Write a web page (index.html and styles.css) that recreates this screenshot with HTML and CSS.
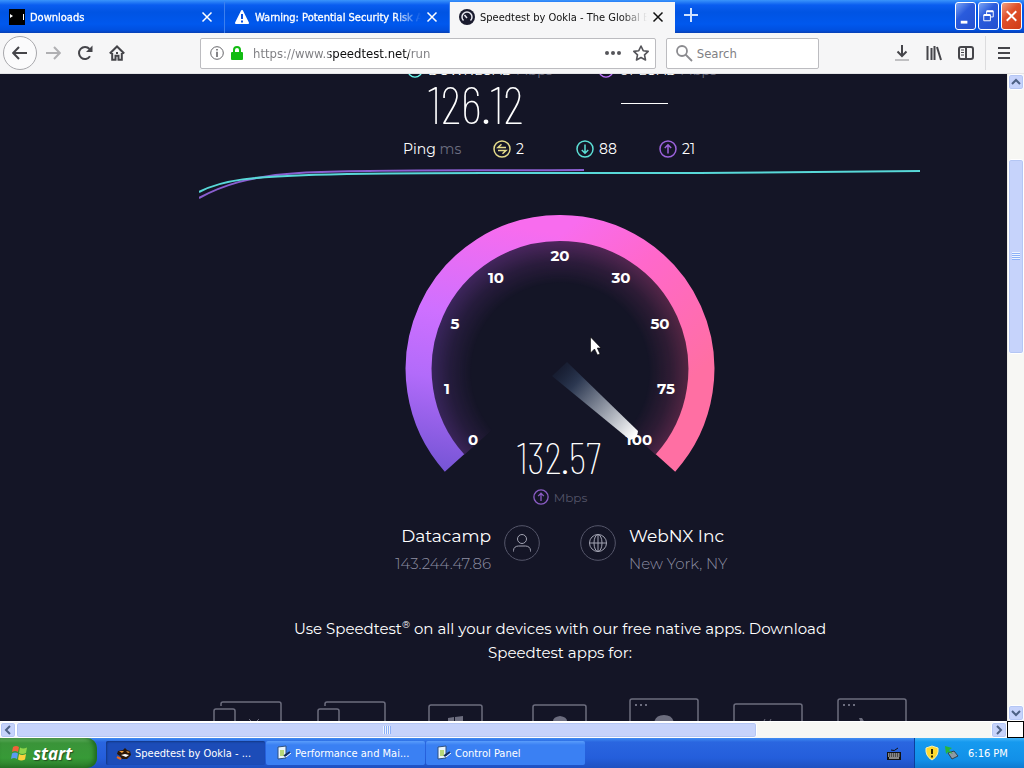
FILE: index.html
```html
<!DOCTYPE html>
<html lang="en">
<head>
<meta charset="utf-8">
<title>Speedtest by Ookla - The Global Broadband Speed Test</title>
<link rel="stylesheet" href="styles.css">
</head>
<body>
<header class="tabbar">
  <div class="tab">
    <svg class="tab-icon" viewBox="0 0 16 16"><path fill="#000" d="M0 0h16v16H0z"/><path fill="#fff" d="M1 5l3 2-3 2zM14 5h1v6h-1z"/></svg>
    <button class="tab-title">Downloads</button>
    <button class="tab-close" aria-label="Close Downloads"><svg viewBox="0 0 12 12"><path d="M1.500 1.500l9 9M10.500 1.500l-9 9"/></svg></button>
  </div>
  <div class="tab">
    <svg class="tab-icon" viewBox="0 0 16 16"><path fill="#fff" stroke="#fff" stroke-width="2" stroke-linejoin="round" d="M8 2l6 12H2z"/><path fill="#0a50dc" d="M7 5h2v5H7zM7 11.500h2v2H7z"/></svg>
    <button class="tab-title">Warning: Potential Security Risk Ahead</button>
    <button class="tab-close" aria-label="Close Warning"><svg viewBox="0 0 12 12"><path d="M1.500 1.500l9 9M10.500 1.500l-9 9"/></svg></button>
  </div>
  <div class="tab tab-active">
    <svg class="tab-icon" viewBox="0 0 16 16"><circle cx="8" cy="8" r="8" fill="#1a1b2e"/><path d="M4.500 11.500a5 5 0 1 1 7 0" fill="none" stroke="#e8e8f0" stroke-width="1.500"/><path d="M8 9L5.500 6" stroke="#e8e8f0" stroke-width="1.500"/></svg>
    <button class="tab-title">Speedtest by Ookla - The Global Broadband</button>
    <button class="tab-close" aria-label="Close Speedtest"><svg viewBox="0 0 12 12"><path d="M1.500 1.500l9 9M10.500 1.500l-9 9"/></svg></button>
  </div>
  <button class="new-tab" aria-label="New tab"><svg viewBox="0 0 14 14"><path d="M7 0v14M0 7h14"/></svg></button>
  <div class="window-controls">
    <button aria-label="Minimize"><svg viewBox="0 0 20 26"><path d="M5 18h7v3H5z" fill="#fff"/></svg></button>
    <button aria-label="Restore"><svg viewBox="0 0 20 26"><path d="M8 11V8h7v6h-3M5 12h7v6H5z" fill="none" stroke="#fff"/><path d="M8 8h7M5 12h7" stroke="#fff" stroke-width="2"/></svg></button>
    <button class="win-close" aria-label="Close"><svg viewBox="0 0 20 26"><path d="M5 8l10 10M15 8L5 18" stroke="#fff" stroke-width="2"/></svg></button>
  </div>
</header>

<nav class="toolbar">
  <button class="tool back" aria-label="Back"><svg viewBox="0 0 16 16"><path d="M15 8H1.500M7 2L1.200 8 7 14"/></svg></button>
  <button class="tool forward" aria-label="Forward" disabled><svg viewBox="0 0 16 16"><path d="M1 8h13.500M9 2l5.800 6L9 14"/></svg></button>
  <button class="tool" aria-label="Reload"><svg viewBox="0 0 16 16"><path d="M13 11.300A6 6 0 1 1 12.500 4"/><path d="M15.500.500V7H9z" fill="#45454a" stroke="none"/></svg></button>
  <button class="tool" aria-label="Home"><svg viewBox="0 0 16 16"><path d="M.800 8.500L8 1.500l7.200 7M3.200 8v6.800h3.300v-4h3v4h3.300V8"/><path d="M8 7v2" /></svg></button>
  <div class="address">
    <svg class="small-icon" viewBox="0 0 14 14"><circle cx="7" cy="7" r="6.300" fill="none" stroke="#66666a"/><path d="M6.200 3h1.600v1.600H6.200zM6.200 5.800h1.600V11H6.200z" fill="#66666a"/></svg>
    <svg class="small-icon" viewBox="0 0 14 14"><rect x="1" y="6" width="12" height="8" rx="1" fill="#12bc12"/><path d="M4 7V4a3 3 0 0 1 6 0v3" fill="none" stroke="#12bc12" stroke-width="2"/></svg>
    <input class="url" type="text" aria-label="Address" value="https://www.speedtest.net/run">
    <button class="mini" aria-label="Page actions"><svg viewBox="0 0 18 18"><g fill="#55555a"><circle cx="3" cy="9" r="2"/><circle cx="9" cy="9" r="2"/><circle cx="15" cy="9" r="2"/></g></svg></button>
    <button class="mini" aria-label="Bookmark"><svg viewBox="0 0 18 18"><path d="M9 2l2.200 4.700 5 .700-3.700 3.500 1 5.100L9 13.500 4.500 16l1-5.100L1.800 7.400l5-.700z" fill="none" stroke="#55555a" stroke-width="1.600" stroke-linejoin="round"/></svg></button>
  </div>
  <label class="search">
    <svg viewBox="0 0 18 18"><g fill="none" stroke="#8b8b8f" stroke-width="1.800"><circle cx="7" cy="7" r="5"/><path d="M10.500 10.500L17 17"/></g></svg>
    <input type="text" placeholder="Search" aria-label="Search">
  </label>
  <div class="tool-end">
    <button class="tool" aria-label="Downloads"><svg viewBox="0 0 16 16"><path d="M8 0v11M3.500 6.500L8 11l4.500-4.500"/><path d="M1 15h14" stroke-width="1" stroke="#8a8a8e"/></svg></button>
    <button class="tool" aria-label="Library"><svg viewBox="0 0 16 16"><path d="M1.500 1v14M5.500 3v12M8.500 1v14M11 2l4 13" /></svg></button>
    <button class="tool" aria-label="Sidebars"><svg viewBox="0 0 16 16"><rect x="1" y="2" width="14" height="12" rx="2"/><path d="M8 2v12"/><path d="M3 5h3M3 7.500h3M3 10h3" stroke-width="1"/></svg></button>
    <button class="tool menu" aria-label="Menu"><svg viewBox="0 0 16 16"><path d="M2 3h12M2 8h12M2 13h12"/></svg></button>
  </div>
</nav>

<div class="viewport">
  <main class="page">
    <section class="results">
      <div class="label"><svg class="ring" viewBox="0 0 18 18"><circle cx="9" cy="9" r="8" stroke="#6afff3"/></svg><span>DOWNLOAD <i>Mbps</i></span></div>
      <div class="label"><svg class="ring" viewBox="0 0 18 18"><circle cx="9" cy="9" r="8" stroke="#bf71ff"/></svg><span>UPLOAD <i>Mbps</i></span></div>
      <div class="value">126.12</div>
      <div class="value"><span class="dash"></span></div>
    </section>
    <section class="ping">
      <span>Ping <i>ms</i></span>
      <span class="metric"><svg class="ring" viewBox="0 0 18 18"><g stroke="#e6dc8a"><circle cx="9" cy="9" r="8"/><path d="M13 7.500H5L8.500 4.300M5 10.500h8L9.500 13.700"/></g></svg>2</span>
      <span class="metric"><svg class="ring" viewBox="0 0 18 18"><g stroke="#5ce0d6"><circle cx="9" cy="9" r="8"/><path d="M9 4.500v8.500M5.800 10L9 13.200 12.200 10"/></g></svg>88</span>
      <span class="metric"><svg class="ring" viewBox="0 0 18 18"><g stroke="#9c62dc"><circle cx="9" cy="9" r="8"/><path d="M9 13.500V5M5.800 8L9 4.800 12.200 8"/></g></svg>21</span>
    </section>
    <svg class="graph" viewBox="0 0 722 40" aria-label="Speed over time">
      <path d="M0 34C22 22 50 12 100 9 180 5 260 7 385 6" stroke="#8a5fd0"/>
      <path d="M0 28C25 15 55 13 110 11 180 8 280 9 380 9H500C580 8 660 8 721 7" stroke="#58d8d8"/>
    </svg>
    <section class="gauge">
      <svg viewBox="400 204 320 280" aria-label="Upload gauge">
        <defs>
          <linearGradient id="arcLeft" gradientUnits="userSpaceOnUse" x1="450" y1="475" x2="500" y2="215">
            <stop offset="0" stop-color="#7454d4"/><stop offset=".35" stop-color="#b26bfa"/><stop offset=".6" stop-color="#ce70ff"/><stop offset=".97" stop-color="#f86cee"/>
          </linearGradient>
          <linearGradient id="arcRight" gradientUnits="userSpaceOnUse" x1="550" y1="215" x2="690" y2="380">
            <stop offset=".1" stop-color="#f86cee"/><stop offset=".45" stop-color="#ff68cb"/><stop offset="1" stop-color="#ff6fa3"/>
          </linearGradient>
          <linearGradient id="glowTint" x1="0" x2="1"><stop offset="0" stop-color="#713fb0"/><stop offset=".5" stop-color="#a63fae"/><stop offset="1" stop-color="#b8406e"/></linearGradient>
          <radialGradient id="glowFade" gradientUnits="userSpaceOnUse" cx="560" cy="372" r="130">
            <stop offset=".68" stop-color="#000"/><stop offset=".85" stop-color="#2a2a2a"/><stop offset="1" stop-color="#666"/>
          </radialGradient>
          <mask id="glowMask"><path d="M464 455A129 129 0 1 1 656 455L560 369Z" fill="url(#glowFade)"/></mask>
          <linearGradient id="needle" gradientUnits="userSpaceOnUse" x1="556" y1="366" x2="634" y2="437">
            <stop offset="0" stop-color="#1c2a44" stop-opacity=".2"/><stop offset=".25" stop-color="#2c3851"/><stop offset="1" stop-color="#fff"/>
          </linearGradient>
        </defs>
        <rect x="430" y="240" width="260" height="220" fill="url(#glowTint)" mask="url(#glowMask)"/>
        <path d="M454.500 463A141 141 0 0 1 561 228" fill="none" stroke="url(#arcLeft)" stroke-width="26"/>
        <path d="M560 228A141 141 0 0 1 665.500 463" fill="none" stroke="url(#arcRight)" stroke-width="26"/>
        <g class="ticks">
          <text x="473" y="445">0</text><text x="447" y="394">1</text><text x="455" y="329">5</text><text x="496" y="283">10</text><text x="560" y="261">20</text><text x="621" y="283">30</text><text x="660" y="329">50</text><text x="666" y="394">75</text><text x="639" y="445">100</text>
        </g>
        <path d="M552 376L567 362 638 431Q638 438 630 440Z" fill="url(#needle)"/>
        <text class="reading" x="559" y="474">132.57</text>
      </svg>
      <svg class="cursor" viewBox="0 0 12 20"><path d="M.500 1v16l4-4 3 6 2.500-1-2.700-6H11z" fill="#fff" stroke="#000" stroke-width=".6"/></svg>
    </section>
    <p class="unit"><svg class="ring" viewBox="0 0 18 18"><g stroke="#8a5cc4"><circle cx="9" cy="9" r="8"/><path d="M9 13.500V5M5.800 8L9 4.800 12.200 8"/></g></svg>Mbps</p>
    <section class="hosts">
      <div class="host host-client">
        <svg class="host-icon" viewBox="0 0 36 36"><circle cx="18" cy="18" r="17.300" stroke="#55566a"/><circle cx="18" cy="14" r="4.500"/><path d="M9.500 26.500v-1c0-3 2.500-4.500 5-4.500h7c2.500 0 5 1.500 5 4.500v1"/></svg>
        <div class="host-text"><b>Datacamp</b><span>143.244.47.86</span></div>
      </div>
      <div class="host">
        <svg class="host-icon" viewBox="0 0 36 36"><circle cx="18" cy="18" r="17.300" stroke="#55566a"/><circle cx="18" cy="18" r="8.500"/><ellipse cx="18" cy="18" rx="4" ry="8.500"/><path d="M18 9.500v17M9.500 18h17"/></svg>
        <div class="host-text"><b>WebNX Inc</b><span>New York, NY</span></div>
      </div>
    </section>
    <p class="promo">Use Speedtest<sup>®</sup> on all your devices with our free native apps. Download Speedtest apps for:</p>
    <section class="devices">
      <svg viewBox="0 0 104 40"><path d="M25 11V9q0-2 2-2h56q2 0 2 2v31M18 40V16q0-2 2-2h17q2 0 2 2v24"/><path class="faint" d="M53 24l2 2M63 24l-2 2"/></svg>
      <svg viewBox="0 0 104 40"><path d="M25 11V9q0-2 2-2h56q2 0 2 2v31M18 40V16q0-2 2-2h17q2 0 2 2v24"/></svg>
      <svg viewBox="0 0 104 40"><path d="M25 40V12q0-2 2-2h49q2 0 2 2v28"/><path class="solid" d="M44 23l6-1v8h-6zM51 22l8-1v9h-8z"/></svg>
      <svg viewBox="0 0 104 40"><path d="M25 40V12q0-2 2-2h49q2 0 2 2v28"/><path class="solid" d="M45 30v-4q0-4 7-5 7 1 7 5v4z"/></svg>
      <svg viewBox="0 0 104 40"><path d="M18 40V6q0-2 2-2h64q2 0 2 2v34"/><path class="solid" d="M23 9h2v2h-2zM28 9h2v2h-2zM33 9h2v2h-2zM42 30q0-10 10-10t10 10z"/></svg>
      <svg viewBox="0 0 104 40"><path d="M18 40V11q0-2 2-2h64q2 0 2 2v29"/><path class="faint" d="M48 26l1-2M54 26l1-2"/></svg>
      <svg viewBox="0 0 104 40"><path d="M18 40V6q0-2 2-2h64q2 0 2 2v34"/><path class="solid" d="M23 9h2v2h-2zM28 9h2v2h-2zM33 9h2v2h-2zM39 23l3 0 3 5h-4z"/></svg>
    </section>
  </main>
  <div class="scroll scroll-y">
    <button aria-label="Scroll up"><svg viewBox="0 0 14 14"><path d="M3 9l4-4 4 4"/></svg></button>
    <span class="before"></span><span class="thumb"></span><span class="after"></span>
    <button aria-label="Scroll down"><svg viewBox="0 0 14 14"><path d="M3 5l4 4 4-4"/></svg></button>
  </div>
  <div class="scroll scroll-x">
    <button aria-label="Scroll left"><svg viewBox="0 0 14 14"><path d="M9 3L5 7l4 4"/></svg></button>
    <span class="thumb"></span><span class="after"></span>
    <button aria-label="Scroll right"><svg viewBox="0 0 14 14"><path d="M5 3l4 4-4 4"/></svg></button>
  </div>
  <div class="corner"></div>
</div>

<footer class="taskbar">
  <button class="start"><svg viewBox="0 0 18 18"><path d="M2 3q3-2 6 0L7 8Q4 6 1 8z" fill="#f0623a"/><path d="M9 3.500q3 2 7 0L15 9q-4 2-7 0z" fill="#8fd54a"/><path d="M1 9.500q3-2 6 0L6 15q-3-2-6 0z" fill="#5b9bf0"/><path d="M8 10q3 2 7 0l-1 5.500q-4 2-7 0z" fill="#fbd13c"/></svg>start</button>
  <button class="task task-active"><svg viewBox="0 0 16 16"><path d="M2 6l5-1 2-2 2 2 3 1 1 4-4 4H6L4 11 1 9z" fill="#2a1608"/><path d="M3 6l5 0-2 2zM10 6l4 1-2 1z" fill="#f4a340"/><path d="M5 10l4-1 4 1-3 2z" fill="#fff"/><path d="M1 12l4 2" stroke="#e66a1e" stroke-width="2"/></svg>Speedtest by Ookla - ...</button>
  <button class="task"><svg viewBox="0 0 16 16"><path d="M2 2l8-1v12l-8 1z" fill="#e8f4fa" stroke="#2c4f80"/><path d="M4 5l4 0v6H4z" fill="#b8d878"/><path d="M8 11l6-4" stroke="#152c60" stroke-width="2"/><path d="M10 12l5-4" stroke="#fff"/></svg>Performance and Mai...</button>
  <button class="task"><svg viewBox="0 0 16 16"><path d="M2 2l8-1v12l-8 1z" fill="#e8f4fa" stroke="#2c4f80"/><path d="M4 5l4 0v6H4z" fill="#b8d878"/><path d="M8 11l6-4" stroke="#152c60" stroke-width="2"/><path d="M10 12l5-4" stroke="#fff"/></svg>Control Panel</button>
  <svg class="keyboard" viewBox="0 0 14 14"><path d="M4 3q3 2 7-2" stroke="#111" fill="none"/><path d="M0 5h14v8H0z" fill="#111"/><path d="M1 7h12M1 9h12" stroke="#fff" stroke-dasharray="1.500 .5"/><path d="M2 11h10" stroke="#fff"/></svg>
  <div class="tray">
    <svg viewBox="0 0 16 16"><path d="M8 1l6 2q1 8-6 12Q1 11 2 3z" fill="#ffd92e" stroke="#f6f0b0"/><path d="M7 4h2v5H7zM7 10.500h2v2H7z" fill="#332a00"/></svg>
    <svg viewBox="0 0 16 16"><path d="M5 8l6-2 4 5-6 3z" fill="#8d9aa4" stroke="#2e4350"/><path d="M2 1l7 2-3 2 4 4-5-2-2 2z" fill="#28b53a"/></svg>
    <time>6:16 PM</time>
  </div>
</footer>
</body>
</html>
```
FILE: styles.css
```css
* { box-sizing: border-box; }

body {
  margin: 0;
  height: 100vh;
  display: flex;
  flex-direction: column;
  overflow: hidden;
  font-family: "DejaVu Sans Condensed", "Noto Sans", sans-serif;
  font-size: 11px;
}

button {
  margin: 0;
  padding: 0;
  border: 0;
  background: none;
  color: inherit;
  font: inherit;
}

input {
  min-width: 0;
  border: 0;
  padding: 0;
  outline: 0;
  background: none;
  font: inherit;
}

svg { display: block; flex: none; }

/* Tabs */
.tabbar {
  display: flex;
  flex: none;
  height: 33px;
  padding-top: 2px;
  background: linear-gradient(#3a94fb, #0a5df0 5px, #0054e3 12px, #0058ee 24px, #0050e0 30px, #0840b4);
}

.tab {
  display: flex;
  align-items: center;
  flex: 0 1 225px;
  min-width: 0;
  gap: 5px;
  padding: 0 11px 1px 9px;
  color: #fff;
  border-right: 1px solid #3d80ee;
}

.tab-icon { width: 16px; height: 16px; }

.tab-title {
  flex: 1;
  min-width: 0;
  overflow: hidden;
  white-space: nowrap;
  text-align: left;
  -webkit-text-stroke: 0.3px currentColor;
  mask-image: linear-gradient(to left, transparent, #000 26px);
}

.tab-close svg { width: 12px; height: 12px; }
.tab-close path { stroke: currentColor; stroke-width: 1.5; }

.tab-active {
  background: #f6f6f7;
  color: #111;
  border-right: 0;
}

.tab-active .tab-title { -webkit-text-stroke: 0; }

.new-tab { padding: 0 10px 5px 9px; }
.new-tab svg { width: 14px; height: 14px; }
.new-tab path { stroke: #cfe2ff; stroke-width: 2; }

.window-controls {
  display: flex;
  gap: 2px;
  margin-left: auto;
  padding: 0 2px;
}

.window-controls button {
  width: 21px;
  height: 28px;
  border: 1px solid #fff;
  border-radius: 3px;
  background: linear-gradient(135deg, #7ba5f5, #2a5bdc 40%, #2350cf);
}

.window-controls svg { width: 19px; height: 26px; }
.window-controls .win-close { background: linear-gradient(135deg, #f0a184, #e0512b 40%, #cf3c16); }

/* Navigation toolbar */
.toolbar {
  display: flex;
  align-items: center;
  flex: none;
  height: 41px;
  padding: 0 3px;
  background: #f6f6f7;
  border-bottom: 1px solid #e4e4e6;
  font-size: 13px;
}

.tool {
  display: grid;
  flex: none;
  place-items: center;
  width: 32px;
  height: 34px;
}

.tool svg { width: 16px; height: 16px; fill: none; stroke: #45454a; stroke-width: 2; }

.back {
  width: 34px;
  border: 1px solid #a8a8ac;
  border-radius: 50%;
  background: #fbfbfc;
}

.forward svg { stroke: #b0b0b3; }

.address,
.search {
  display: flex;
  align-items: center;
  min-width: 0;
  height: 31px;
  border: 1px solid #bcbcc0;
  border-radius: 2px;
  background: #fff;
}

.address {
  flex: 13 1 0;
  margin-left: 67px;
  padding: 0 5px 0 9px;
}

.small-icon { width: 14px; height: 14px; margin-right: 6px; }

.url {
  flex: 1;
  margin-left: 3px;
  height: 26px;
  color: transparent;
  background: linear-gradient(90deg, #7c7c80 77px, #0c0c0d 77px, #0c0c0d 156px, #7c7c80 156px);
  background-clip: text;
  -webkit-background-clip: text;
}

.mini { margin-left: 10px; }
.mini svg { width: 18px; height: 18px; }

.search {
  flex: 4 1 0;
  gap: 4px;
  margin-left: 10px;
  padding: 0 8px;
}

.search svg { width: 18px; height: 18px; }
.search input { flex: 1; }
.search input::placeholder { color: #808084; opacity: 1; }

.tool-end {
  display: flex;
  flex: none;
  margin-left: 67px;
}

.tool-end .menu {
  width: 36px;
  margin-left: 3px;
  border-left: 1px solid #dcdcde;
}

/* Browser viewport */
.viewport {
  display: grid;
  grid-template-columns: minmax(0, 1fr) 17px;
  grid-template-rows: minmax(0, 1fr) 17px;
  flex: 1;
  min-height: 0;
}

.page {
  display: flex;
  flex-direction: column;
  align-items: center;
  overflow: hidden;
  padding-left: 113px;
  background: #141526;
  color: #fff;
  font-family: Montserrat, Inter, sans-serif;
  font-size: 15px;
}

.page > * { flex: none; }
.page i { font-style: normal; color: #6d6e80; }

.ring { width: 18px; height: 18px; fill: none; stroke-width: 1.5; }

.results {
  display: grid;
  grid-template-columns: 191px 115px;
  margin-top: -14px;
}

.label {
  display: flex;
  align-items: center;
  gap: 5px;
  height: 20px;
  white-space: nowrap;
  font-size: 13px;
}

.label .ring { width: 16px; height: 16px; }

.value {
  display: flex;
  align-items: center;
  height: 46px;
  padding-left: 21px;
  font-family: "Barlow Condensed", "Roboto Condensed", Roboto, sans-serif;
  font-size: 53px;
  font-weight: 200;
  line-height: 44px;
}

.dash { width: 47px; height: 1px; margin-left: 2px; background: #fff; }

.ping {
  display: grid;
  grid-template-columns: 90px 83px 83px 58px;
  align-items: center;
  height: 22px;
  margin-top: 12px;
  font-size: 14px;
}

.metric { display: flex; align-items: center; gap: 5px; }

.graph {
  width: 722px;
  height: 40px;
  margin-top: 4px;
  fill: none;
  stroke-width: 2;
}

.gauge { position: relative; width: 320px; }
.gauge > svg:first-child { width: 100%; }

.ticks {
  fill: #fff;
  font-size: 15px;
  font-weight: 700;
  text-anchor: middle;
}

.reading {
  fill: #fff;
  font-family: "Barlow Condensed", "Roboto Condensed", Roboto, sans-serif;
  font-size: 44px;
  font-weight: 200;
  text-anchor: middle;
}

.cursor {
  position: absolute;
  left: 190px;
  top: 132px;
  width: 12px;
  height: 20px;
}

.unit {
  display: flex;
  align-items: center;
  gap: 5px;
  height: 20px;
  margin: 3px 0 0;
  color: #55566a;
  font-size: 12px;
}

.unit .ring { width: 16px; height: 16px; }

.hosts {
  display: flex;
  gap: 40px;
  margin-top: 16px;
}

.host { display: flex; gap: 13px; width: 229px; }
.host-client { flex-direction: row-reverse; text-align: right; }
.host-text { display: flex; flex-direction: column; }
.host b { font-size: 17px; font-weight: 400; line-height: 27px; }
.host span { color: #8e8fa3; font-weight: 300; line-height: 27px; }

.host-icon {
  width: 36px;
  height: 36px;
  margin-top: 2px;
  fill: none;
  stroke: #a2a3b2;
}

.promo {
  width: 550px;
  margin: 40px 0 0;
  text-align: center;
  font-size: 15px;
  line-height: 24px;
}

.promo sup { font-size: 10px; line-height: 0; }

.devices { display: flex; margin-top: 30px; }
.devices svg { width: 104px; height: 40px; fill: none; stroke: #6c6d7e; stroke-width: 1.5; }
.devices .solid { fill: #6c6d7e; stroke: none; }
.devices .faint { stroke-width: 1; }

/* Scroll bars */
.scroll { display: flex; background: #f7f7f4; }
.scroll-y { flex-direction: column; border-left: 1px solid #eeeee8; }
.scroll-x { border-top: 1px solid #fff; }

.scroll button,
.thumb {
  border: 1px solid #fff;
  border-radius: 3px;
  background: #c6d3fb;
  box-shadow: inset 0 0 0 1px #b4c6f4;
}

.scroll button { flex: none; width: 16px; height: 16px; }
.scroll button svg { width: 14px; height: 14px; fill: none; stroke: #4d6185; stroke-width: 2; }

.thumb {
  display: grid;
  place-items: center;
}

.thumb::before { content: ""; width: 8px; height: 8px; }
.scroll-y .thumb::before { background: repeating-linear-gradient(#eef4fe 0 1px, #8cb0f8 1px 2px); }
.scroll-x .thumb::before { background: repeating-linear-gradient(90deg, #eef4fe 0 1px, #8cb0f8 1px 2px); }
.scroll-y .before { flex: 69; }
.scroll-y .thumb { flex: 194; }
.scroll-y .after { flex: 352; }
.scroll-x .thumb { flex: 741; }
.scroll-x .after { flex: 234; }
.corner { border: 1px solid #000; background: #fff; }

/* Taskbar */
.taskbar {
  display: flex;
  align-items: stretch;
  flex: none;
  height: 30px;
  background: linear-gradient(#3f8cf3, #2a66e0 4px, #245edb 20px, #1f50c0);
  color: #fff;
}

.start {
  display: flex;
  align-items: center;
  gap: 4px;
  width: 97px;
  margin-right: 9px;
  padding-left: 11px;
  border-radius: 0 10px 10px 0;
  background: linear-gradient(#6cb86a, #3a9439 5px, #379a37 20px, #2a7a2a);
  box-shadow: inset -3px 0 4px #1f6a1f;
  font: italic 700 17px "Open Sans", sans-serif;
  text-shadow: 1px 1px 1px #234d20;
}

.start svg { width: 18px; height: 18px; }

.task {
  display: flex;
  align-items: center;
  flex: 0 1 159px;
  gap: 3px;
  min-width: 0;
  margin: 3px 1px 3px 0;
  padding-left: 10px;
  border-radius: 2px;
  background: linear-gradient(#5a9dfb, #3a80f3 4px, #3a80f3);
  white-space: nowrap;
}

.task svg { width: 16px; height: 16px; }
.task-active { background: #1c4cb8; box-shadow: inset 1px 1px 2px #123784; }
.keyboard { width: 14px; height: 14px; margin: 9px 13px 0 auto; }

.tray {
  display: flex;
  align-items: center;
  gap: 3px;
  width: 110px;
  padding-left: 9px;
  border-left: 1px solid #0b3f9c;
  background: linear-gradient(#41b4f8, #169aef 4px, #1290e8 22px, #0f7ad0);
}

.tray svg { width: 16px; height: 16px; }
.tray time { margin-left: 6px; }
```
